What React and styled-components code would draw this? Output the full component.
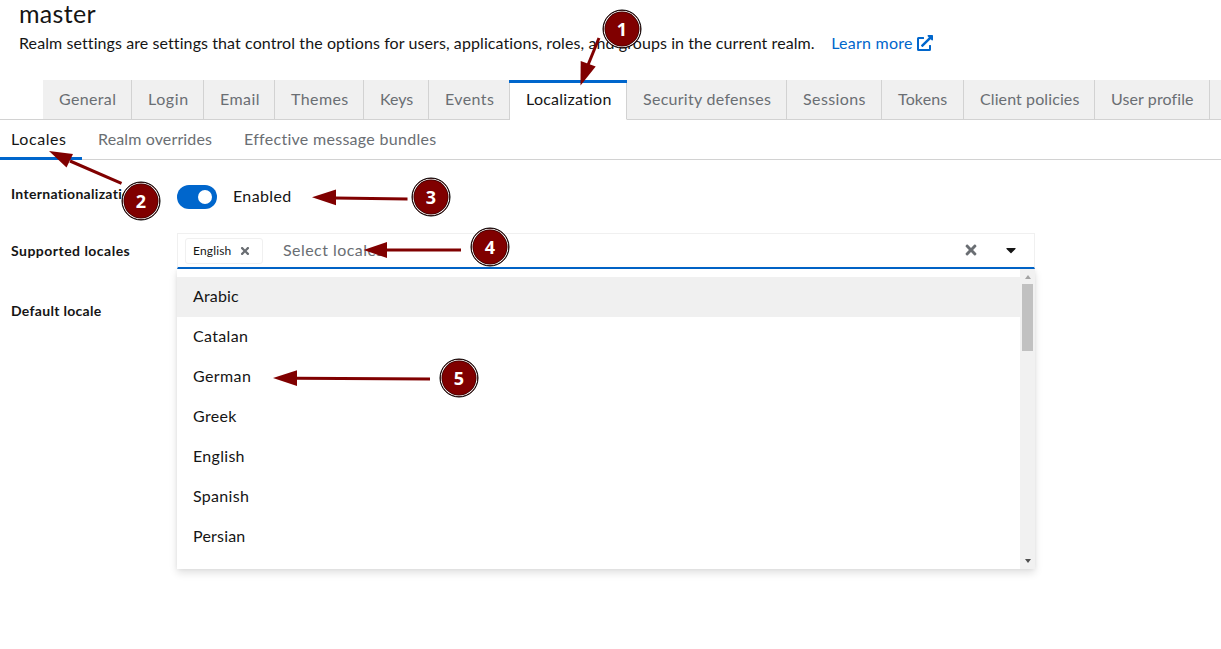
import React from "react";
import styled, { createGlobalStyle } from "styled-components";
import { FaExternalLinkAlt, FaTimes, FaCaretDown } from "react-icons/fa";

const GlobalStyle = createGlobalStyle`
  * { box-sizing: border-box; }
  body {
    margin: 0;
    overflow: hidden;
    background: #fff;
    color: #151515;
    font-family: Lato, "Noto Sans", sans-serif;
    font-size: 16px;
    line-height: 24px;
  }
`;

const Page = styled.main`
  position: relative;
  width: 1221px;
  height: 649px;
  overflow: hidden;
`;

const Text = styled.span`
  display: inline-block;
  margin-bottom: 2px;
  letter-spacing: ${(p) => p.$track || 0}px;
  white-space: nowrap;
`;

const Header = styled.header`
  height: 80px;
  padding-left: 19px;
`;

const Title = styled.h1`
  margin: 0;
  height: 32px;
  font-size: 25px;
  font-weight: 400;
  line-height: 26px;
  letter-spacing: 0.3px;
`;

const Description = styled.p`
  display: flex;
  align-items: center;
  margin: 0;
  height: 24px;
`;

const LearnMore = styled.a`
  display: flex;
  align-items: center;
  gap: 4px;
  margin-left: 16.5px;
  color: #0066cc;
  svg { margin-bottom: 2px; }
`;

const Tabs = styled.nav`
  display: flex;
  height: 40px;
`;

const TabsLead = styled.div`
  width: 43px;
  border-bottom: 1px solid #d2d2d2;
`;

const Tab = styled.button`
  position: relative;
  flex: none;
  width: ${(p) => p.$width}px;
  padding: 0 0 0 16px;
  border: 0;
  border-right: 1px solid #d2d2d2;
  border-bottom: 1px solid ${(p) => (p.$active ? "#fff" : "#d2d2d2")};
  background: ${(p) => (p.$active ? "#fff" : "#f0f0f0")};
  color: ${(p) => (p.$active ? "#151515" : "#6a6e73")};
  font: inherit;
  text-align: left;

  &::before {
    content: "";
    position: absolute;
    top: 0;
    left: -1px;
    right: -1px;
    height: ${(p) => (p.$active ? 3 : 0)}px;
    background: #0066cc;
  }
`;

const TabsRest = styled.div`
  flex: 1;
  border-bottom: 1px solid #d2d2d2;
  background: #f0f0f0;
`;

const SubTabs = styled.nav`
  display: flex;
  height: 40px;
  border-bottom: 1px solid #d2d2d2;
`;

const SubTab = styled.button`
  flex: none;
  width: ${(p) => p.$width}px;
  height: 40px;
  padding: 0 0 0 ${(p) => p.$inset}px;
  border: 0;
  background: none;
  box-shadow: ${(p) => (p.$active ? "inset 0 -3px #0066cc" : "none")};
  color: ${(p) => (p.$active ? "#151515" : "#6a6e73")};
  font: inherit;
  text-align: left;
`;

const Form = styled.form`
  display: grid;
  grid-template-columns: 166px 858px;
  grid-template-rows: 73px 60px 40px;
  padding-left: 11px;
`;

const Label = styled.label`
  padding-top: ${(p) => p.$top}px;
  font-size: 14px;
  font-weight: 700;
  line-height: 20px;
`;

const SwitchRow = styled.div`
  display: flex;
  align-items: center;
  gap: 16px;
  height: 24px;
  margin-top: 25px;
`;

const Switch = styled.span`
  display: flex;
  align-items: center;
  justify-content: flex-end;
  width: 40px;
  height: 24px;
  padding-right: 5px;
  border-radius: 12px;
  background: #0066cc;
`;

const Knob = styled.span`
  width: 14px;
  height: 14px;
  border-radius: 50%;
  background: #fff;
`;

const Select = styled.div`
  position: relative;
  height: 36px;
`;

const Control = styled.div`
  display: flex;
  align-items: center;
  height: 36px;
  padding: 0 15px 0 7px;
  border: 1px solid #f0f0f0;
  border-bottom: 2px solid #0066cc;
`;

const Chip = styled.span`
  display: flex;
  align-items: center;
  justify-content: space-between;
  width: 78px;
  height: 26px;
  padding: 0 11px 0 7px;
  border: 1px solid #f0f0f0;
  border-radius: 3px;
  font-size: 12px;
  letter-spacing: 0.15px;
  svg { color: #6a6e73; }
`;

const Placeholder = styled.span`
  display: flex;
  flex: 1;
  padding-left: 20px;
  color: #6a6e73;
`;

const Actions = styled.span`
  display: flex;
  align-items: center;
  gap: 24px;
  margin-bottom: 1px;
`;

const Menu = styled.div`
  position: absolute;
  top: 36px;
  left: 0;
  display: flex;
  width: 858px;
  height: 300px;
  background: #fff;
  box-shadow: 0 4px 8px rgba(3, 3, 3, 0.12), 0 0 4px rgba(3, 3, 3, 0.06);
`;

const Options = styled.ul`
  flex: 1;
  margin: 0;
  padding: 8px 0 0;
  list-style: none;
`;

const Option = styled.li`
  display: flex;
  align-items: center;
  height: 40px;
  padding-left: 16px;
  background: ${(p) => (p.$active ? "#f0f0f0" : "transparent")};
`;

const Scrollbar = styled.div`
  display: flex;
  flex-direction: column;
  align-items: center;
  width: 15px;
  padding: 6px 0;
  background: #f1f1f1;
`;

const Arrow = styled.i`
  border: 3.5px solid transparent;
  border-top: ${(p) => (p.$up ? "0" : "4px solid #505050")};
  border-bottom: ${(p) => (p.$up ? "4px solid #a3a3a3" : "0")};
`;

const Thumb = styled.div`
  width: 11px;
  height: 67px;
  margin: 5px 0 auto;
  background: #c1c1c1;
`;

const Pointers = styled.svg`
  position: absolute;
  inset: 0;
  fill: #800000;
  pointer-events: none;
`;

const Marker = styled.div`
  position: absolute;
  left: ${(p) => p.$x - 20}px;
  top: ${(p) => p.$y - 20}px;
  width: 39px;
  height: 39px;
  transform: translate(0.5px, 0.5px);
  border: 1px solid #000;
  border-radius: 50%;
  background: #800000;
  box-shadow: inset 0 0 0 1px #fff, inset 0 0 0 1.8px #3a0000;
  color: #fff;
  font: 700 18px/37px "Open Sans", sans-serif;
  text-align: center;
`;

const tabs = [
  ["General", 89, 0.35],
  ["Login", 72, 0.6],
  ["Email", 71, 0.45],
  ["Themes", 89, 0.4],
  ["Keys", 65, 0],
  ["Events", 81, 0.4],
  ["Localization", 117, 0.25],
  ["Security defenses", 160, 0.28],
  ["Sessions", 95, 0.4],
  ["Tokens", 82, 0.15],
  ["Client policies", 131, 0.1],
  ["User profile", 115, 0.1],
];

const locales = [
  ["Arabic", 0.15],
  ["Catalan", 0.35],
  ["German", 0.4],
  ["Greek", 0.35],
  ["English", 0.3],
  ["Spanish", 0.3],
  ["Persian", 0.2],
];

const markers = [
  [622, 29],
  [141, 201],
  [431, 197],
  [490, 247],
  [459, 378],
];

const pointers = [
  { from: [599, 38], neck: [588, 65], head: "580.5,85.5 580.7,61 595.7,66.5" },
  { from: [121.5, 183.3], neck: [70, 161], head: "49,151 73,154 66.5,167.5" },
  { from: [407.5, 199], neck: [335, 197.9], head: "312,197.3 336,189.5 336,205.3" },
  { from: [461, 250], neck: [386, 250], head: "363.5,250 387,242 387,258" },
  { from: [430, 379], neck: [296, 378.2], head: "273,378 297,370.2 297,386" },
];

export default function App() {
  return (
    <Page>
      <GlobalStyle />
      <Header>
        <Title>master</Title>
        <Description>
          <Text $track={0.09}>
            Realm settings are settings that control the options for users, applications, roles, and groups in the current realm.
          </Text>
          <LearnMore>
            <Text $track={0.25}>Learn more</Text>
            <FaExternalLinkAlt size={16} />
          </LearnMore>
        </Description>
      </Header>

      <Tabs>
        <TabsLead />
        {tabs.map(([name, width, track]) => (
          <Tab key={name} $width={width} $active={name === "Localization"}>
            <Text $track={track}>{name}</Text>
          </Tab>
        ))}
        <TabsRest />
      </Tabs>

      <SubTabs>
        <SubTab $active $width={82} $inset={11}><Text $track={0.6}>Locales</Text></SubTab>
        <SubTab $width={146} $inset={16}><Text $track={0.13}>Realm overrides</Text></SubTab>
        <SubTab $width={224} $inset={16}><Text $track={0.29}>Effective message bundles</Text></SubTab>
      </SubTabs>

      <Form>
        <Label $top={24}><Text $track={0.3}>Internationalization</Text></Label>
        <SwitchRow>
          <Switch><Knob /></Switch>
          <Text $track={0.35}>Enabled</Text>
        </SwitchRow>

        <Label $top={8}><Text $track={0.48}>Supported locales</Text></Label>
        <Select>
          <Control>
            <Chip>
              English
              <FaTimes size={12} />
            </Chip>
            <Placeholder><Text $track={0.45}>Select locales</Text></Placeholder>
            <Actions>
              <FaTimes size={16} color="#6a6e73" />
              <FaCaretDown size={16} />
            </Actions>
          </Control>
          <Menu>
            <Options>
              {locales.map(([name, track], i) => (
                <Option key={name} $active={i === 0}><Text $track={track}>{name}</Text></Option>
              ))}
            </Options>
            <Scrollbar>
              <Arrow $up />
              <Thumb />
              <Arrow />
            </Scrollbar>
          </Menu>
        </Select>

        <Label $top={8}><Text $track={0.3}>Default locale</Text></Label>
      </Form>

      <Pointers width="1221" height="649">
        {pointers.map(({ from, neck, head }) => (
          <g key={head}>
            <line x1={from[0]} y1={from[1]} x2={neck[0]} y2={neck[1]} stroke="#800000" strokeWidth="3" />
            <polygon points={head} />
          </g>
        ))}
      </Pointers>
      {markers.map(([x, y], i) => (
        <Marker key={i} $x={x} $y={y}>{i + 1}</Marker>
      ))}
    </Page>
  );
}
